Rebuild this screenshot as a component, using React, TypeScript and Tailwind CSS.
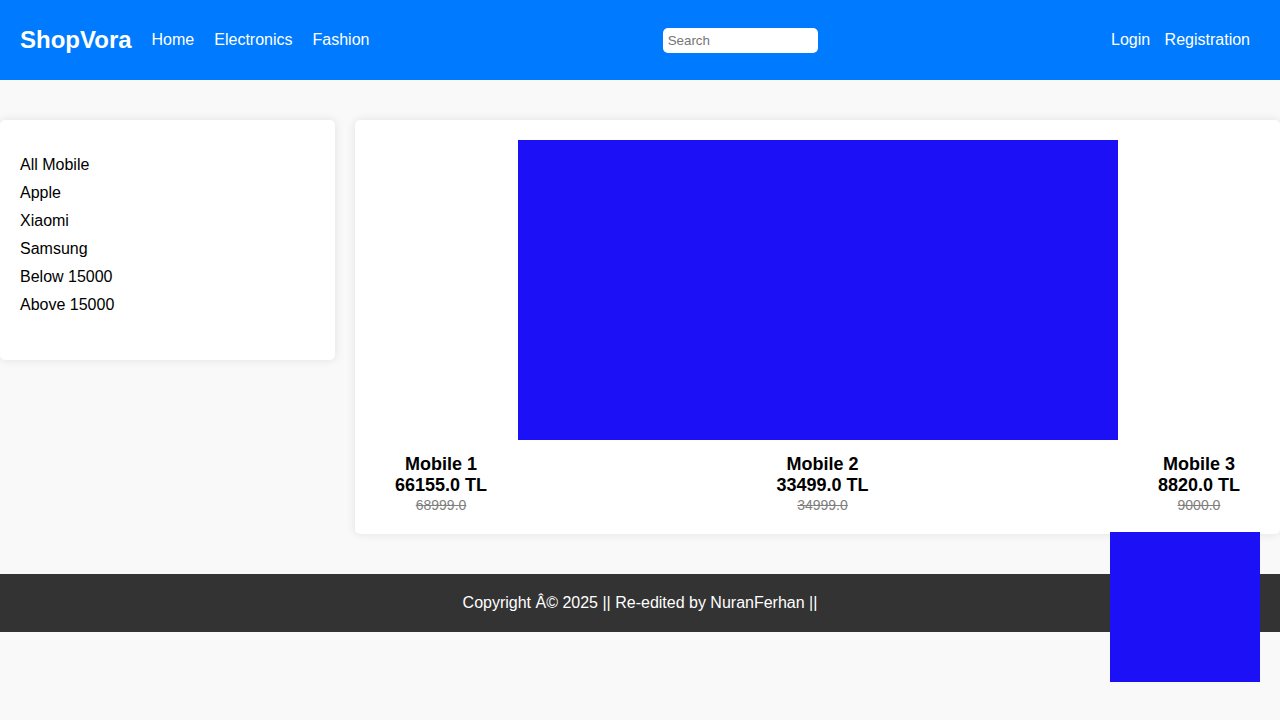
const links = ["Home", "Electronics", "Fashion"];
const filters = ["All Mobile", "Apple", "Xiaomi", "Samsung", "Below 15000", "Above 15000"];
const products = [
  { name: "Mobile 1", price: "66155.0 TL", old: "68999.0" },
  { name: "Mobile 2", price: "33499.0 TL", old: "34999.0" },
  { name: "Mobile 3", price: "8820.0 TL", old: "9000.0" },
];

export default function App() {
  return (
    <div className="min-h-screen bg-[#f9f9f9] font-[Arial,'Liberation_Sans',sans-serif] text-base leading-[18px] text-black">
      <nav className="flex h-20 items-center justify-between bg-[#007bff] px-5 text-white">
        <div className="flex items-center gap-5">
          <div className="text-2xl leading-7 font-bold">ShopVora</div>
          {links.map((l) => (
            <a key={l} href="#">{l}</a>
          ))}
        </div>
        <input
          type="text"
          placeholder="Search"
          className="h-[25px] w-[155px] rounded-[5px] bg-white p-[5px] text-[13.3333px] leading-[15px] text-black placeholder:text-[#757575]"
        />
        <div className="flex gap-[14.45px] pr-2.5">
          <a href="#">Login</a>
          <a href="#">Registration</a>
        </div>
      </nav>

      <main className="flex items-start gap-5 py-10">
        <aside className="h-60 w-[335px] shrink-0 rounded-[5px] bg-white px-5 pt-9 shadow-[0_0_10px_rgba(0,0,0,0.1)]">
          <ul className="flex flex-col gap-2.5">
            {filters.map((f) => (
              <li key={f}><a href="#">{f}</a></li>
            ))}
          </ul>
        </aside>
        <section className="h-[414px] flex-1 rounded-[5px] bg-white p-5 shadow-[0_0_10px_rgba(0,0,0,0.1)]">
          <div className="mx-auto h-[300px] w-[600px] bg-[#1c10f7]" />
          <div className="flex justify-between px-5 pt-3.5 text-center">
            {products.map((p) => (
              <div key={p.name}>
                <h4 className="text-lg leading-[21px] font-bold">{p.name}</h4>
                <div className="text-lg leading-[21px] font-bold">{p.price}</div>
                <div className="text-sm leading-[18px] text-[#808080] line-through">{p.old}</div>
              </div>
            ))}
          </div>
        </section>
      </main>

      <footer className="h-[58px] bg-[#333] py-5 text-center text-white">
        Copyright Â© 2025 || Re-edited by NuranFerhan ||
      </footer>
      <div className="fixed right-5 bottom-[38px] size-[150px] bg-[#1c10f7]" />
    </div>
  );
}
